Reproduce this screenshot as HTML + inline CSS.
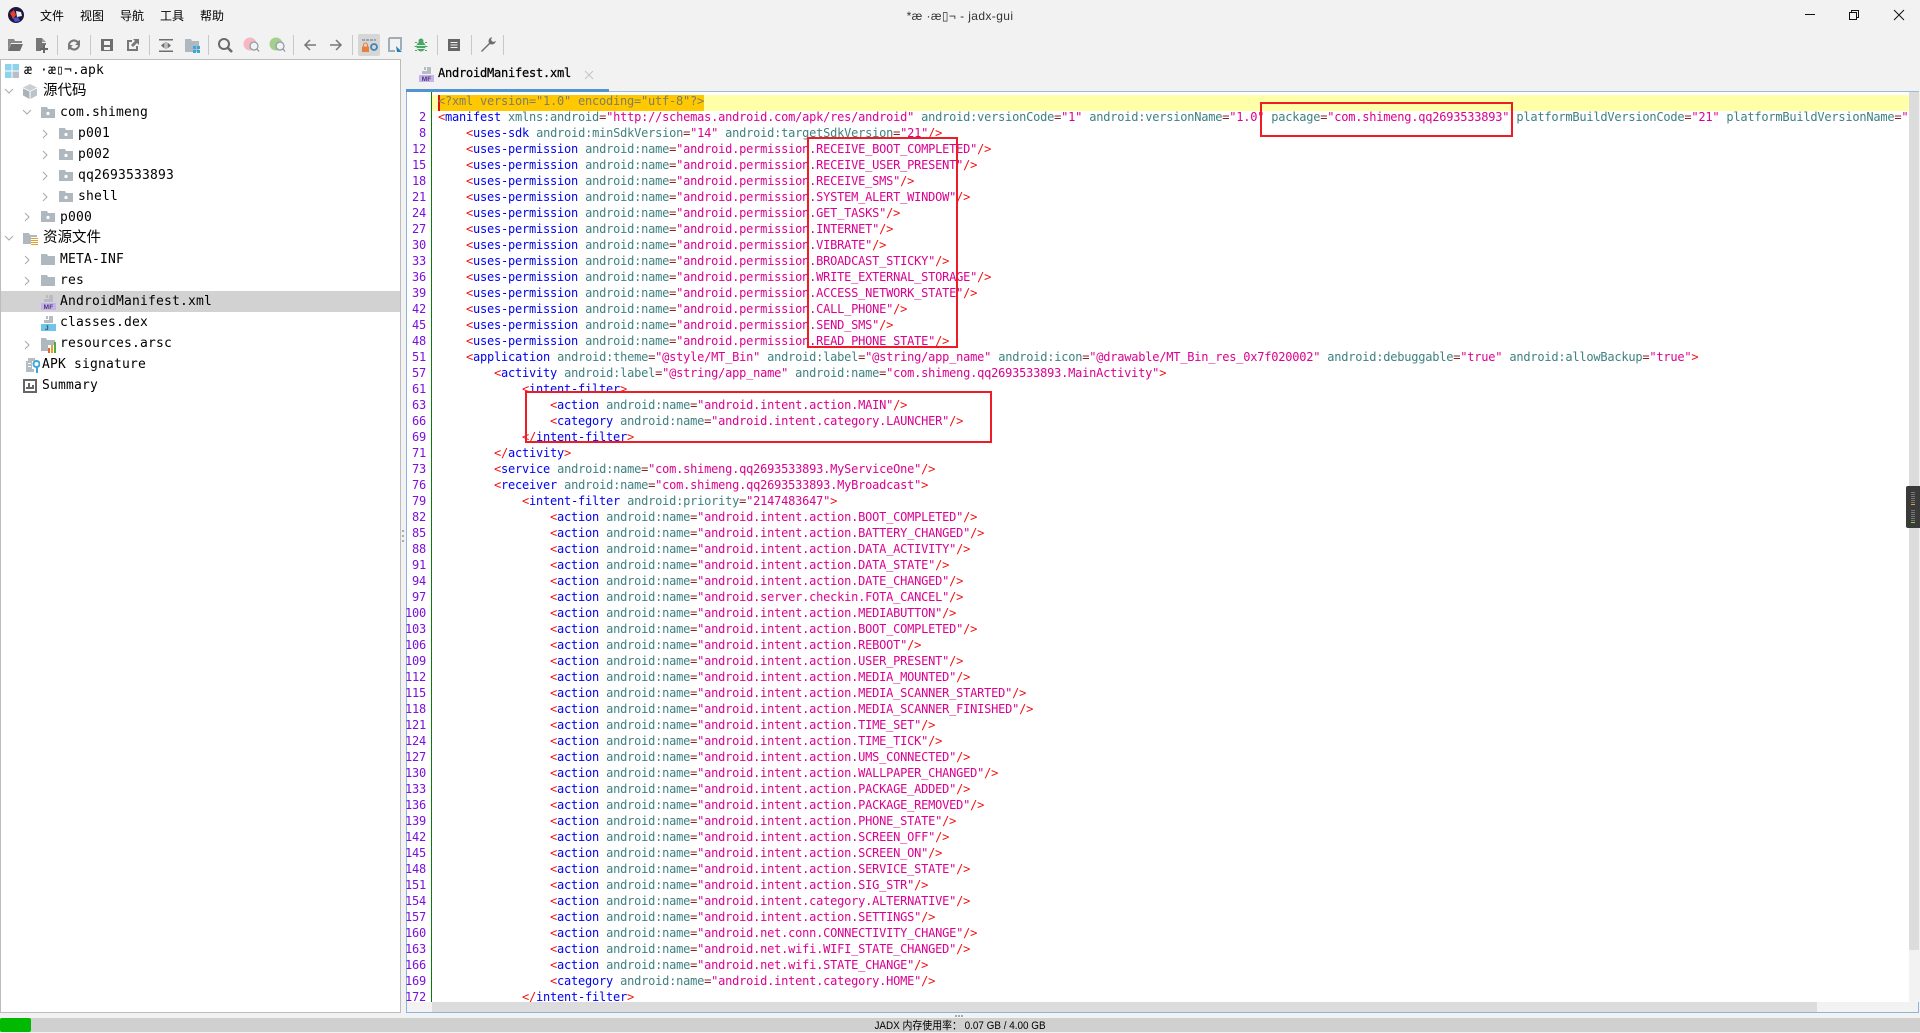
<!DOCTYPE html>
<html><head><meta charset="utf-8"><title>jadx-gui</title>
<style>
html,body{margin:0;padding:0;width:1920px;height:1032px;overflow:hidden;background:#f2f2f2}
.a{position:absolute}
.m{position:absolute;top:7px;font:12px/18px "Liberation Sans","Noto Sans CJK SC",sans-serif;color:#000}
#tree{position:absolute;left:0;top:59px;width:399px;height:952px;background:#fff;border:1px solid #bcbcbc}
.r{position:absolute;left:0;width:400px;height:21px;font:13px/21px "DejaVu Sans Mono",monospace;letter-spacing:.17px;color:#000;white-space:pre}
.r span{position:absolute;top:-1px}
.r span.cj{top:-3px;letter-spacing:0}
.r svg{position:absolute}
.r svg[width="10"]{margin-left:-1px}
.u svg{margin-top:-1px}
.cj{font:14.5px/21px "Noto Sans CJK SC",sans-serif}
#ed{position:absolute;left:406px;top:91px;width:1513px;height:922px;box-sizing:border-box;border:1px solid #8fb3d9;border-top-color:#9fb9d4;background:#fff}
#nums{position:absolute;left:400px;top:93px;width:26px;height:909px;overflow:hidden;text-align:right;font:12px/16px "DejaVu Sans Mono",monospace;letter-spacing:-.224px;color:#7a10d8}
#nums div{height:16px;white-space:pre}
#code{position:absolute;left:432px;top:93px;width:1477px;height:909px;overflow:hidden;font:12px/16px "DejaVu Sans Mono",monospace;letter-spacing:-.224px;color:#000}
#code p{margin:0;height:16px;padding-left:6px;white-space:pre}
b{color:#f01010;font-weight:normal}
u{color:#0000f0;text-decoration:none}
i{color:#3f8080;font-style:normal}
s{color:#8a2020;text-decoration:none}
em{color:#dc0090;font-style:normal}
.box{position:absolute;box-sizing:border-box;border:2px solid #ee1c25}
</style></head>
<body>
<svg width="0" height="0" style="position:absolute">
<defs>
<symbol id="fo" viewBox="0 0 14 12"><path d="M0 1h6l1 2h7v9H0z" fill="#afb8bf"/></symbol>
<symbol id="pk" viewBox="0 0 14 12"><path d="M0 1h6l1 2h7v9H0z" fill="#afb8bf"/><circle cx="7" cy="7.5" r="1.6" fill="#fff"/></symbol>
<symbol id="cr" viewBox="0 0 10 10"><path d="M3 1l4 4-4 4" fill="none" stroke="#a8a8a8" stroke-width="1"/></symbol>
<symbol id="cd" viewBox="0 0 10 10"><path d="M1 3l4 4 4-4" fill="none" stroke="#a8a8a8" stroke-width="1"/></symbol>
<symbol id="mf" viewBox="0 0 15 15"><path d="M5 0h2v3H5zM8 0h4v7H3V4h5z" fill="#b5bcc2"/><rect x="0" y="8" width="15" height="7" fill="#c9b1ec"/><text x="7.5" y="14" font-family="Liberation Sans" font-size="6.5" font-weight="bold" text-anchor="middle" fill="#4a3a70">MF</text></symbol>
</defs>
</svg>

<!-- title bar -->
<svg class="a" style="left:8px;top:7px" width="16" height="16" viewBox="0 0 16 16"><circle cx="8" cy="8" r="8" fill="#1f1640"/><path d="M2 6l4-3 2 5-3 4z" fill="#e8402a"/><path d="M8 4l5 1 1 4-5 1z" fill="#eee"/><path d="M5 11l5-1 2 4-5 1z" fill="#3f57c8"/></svg>
<div class="m" style="left:40px">文件</div>
<div class="m" style="left:80px">视图</div>
<div class="m" style="left:120px">导航</div>
<div class="m" style="left:160px">工具</div>
<div class="m" style="left:200px">帮助</div>
<div class="a" style="left:860px;width:200px;top:7px;text-align:center;font:12px/18px 'Liberation Sans','Noto Sans CJK SC',sans-serif;letter-spacing:.4px;color:#333;white-space:pre">*æ ·æ▯¬ - jadx-gui</div>
<svg class="a" style="left:1800px;top:5px" width="112" height="20" viewBox="0 0 112 20" fill="none" stroke="#111" stroke-width="1"><path d="M5 9.5h10"/><path d="M49.500 7.500h7v7h-7zM51.500 7.500v-2h7v7h-2"/><path d="M94 5l10 10M104 5L94 15"/></svg>

<!-- toolbar -->
<svg class="a" style="left:0;top:30px" width="520" height="30" viewBox="0 0 520 30" fill="#6e6e6e">
<g fill="#c8c8c8"><rect x="57" y="5" width="1" height="20"/><rect x="90" y="5" width="1" height="20"/><rect x="149" y="5" width="1" height="20"/><rect x="208" y="5" width="1" height="20"/><rect x="293" y="5" width="1" height="20"/><rect x="352" y="5" width="1" height="20"/><rect x="437" y="5" width="1" height="20"/><rect x="471" y="5" width="1" height="20"/><rect x="503" y="5" width="1" height="20"/></g>
<path d="M8 9h6l1 2h7v2H11l-3 8z" fill="#888"/><path d="M11 14h12l-3 7H8z" fill="#6e6e6e"/>
<path d="M36 8h6v5h4v2h-3v4h-2v2h-5z" fill="#777"/><path d="M42 8l4 4h-4z" fill="#999"/><path d="M43 15h2v3h3v2h-3v3h-2v-3h-3v-2h3z" fill="#666"/>
<path d="M68 15a6 6 0 0 1 10-4l2-1v5h-5l2-2a4 4 0 0 0-7 2zM80 15a6 6 0 0 1-10 4l-2 1v-5h5l-2 2a4 4 0 0 0 7-2z" fill="#777"/>
<path d="M101 9h12v12h-12zM104 11v4h6v-4zM104 17v3h6v-3z" fill-rule="evenodd" fill="#6e6e6e"/>
<path d="M127 10h5v2h-3v7h7v-3h2v5h-11zM133 9h6v6l-2-2-4 4-2-2 4-4z" fill="#777"/>
<path d="M159 9h14v1.500h-14zM159 20.500h14v1.500h-14z" fill="#6e6e6e"/><path d="M164.500 12.500l-3.500 3 3.500 3zM167.500 12.500l3.500 3-3.500 3z" fill="#6e6e6e"/><rect x="165.500" y="12" width="1" height="7" fill="#888"/>
<path d="M185 9h6l1 2h7v11h-14z" fill="#afb8bf"/><g fill="#3ba6dc"><rect x="193" y="16" width="3" height="3"/><rect x="197" y="16" width="3" height="3"/><rect x="193" y="20" width="3" height="3"/><rect x="197" y="20" width="3" height="3"/></g>
<circle cx="224" cy="14" r="5" fill="none" stroke="#6a6a6a" stroke-width="2"/><path d="M227.500 17.500l4.500 4.500" stroke="#6a6a6a" stroke-width="2.600"/>
<circle cx="250" cy="14" r="6.500" fill="#f4b8c2"/><circle cx="254" cy="16" r="4" fill="#f2f2f2" stroke="#8b9aa6" stroke-width="1.200"/><path d="M257 19l2 2.500" stroke="#8b9aa6" stroke-width="1.400"/>
<circle cx="276" cy="14" r="6.500" fill="#a6cf8f"/><circle cx="280" cy="16" r="4" fill="#f2f2f2" stroke="#8b9aa6" stroke-width="1.200"/><path d="M283 19l2 2.500" stroke="#8b9aa6" stroke-width="1.400"/>
<path d="M316 15h-11M310 10l-5 5 5 5" fill="none" stroke="#777" stroke-width="1.500"/>
<path d="M330 15h11M336 10l5 5-5 5" fill="none" stroke="#777" stroke-width="1.500"/>
<rect x="358" y="4" width="22" height="22" rx="2" fill="#d6d6d6"/>
<path d="M362 9h3v2h-3zM366 9h3v2h-3zM370 9h3v2h-3zM374 9h2v2h-2z" fill="#9aa4ad"/><rect x="362" y="16.500" width="7" height="5.500" fill="#e8803c"/><path d="M363.500 16.500v-1.500a2 2 0 0 1 4 0v1.500" fill="none" stroke="#e8803c"/><circle cx="374" cy="17" r="3" fill="none" stroke="#3d86b8" stroke-width="1.800"/>
<path d="M389 8h12v12M395 21h-6V8" fill="none" stroke="#9eadb8" stroke-width="2"/><path d="M396 16l6 6h-5z" fill="#2680b8"/>
<g fill="#4aa564"><ellipse cx="421" cy="16.500" rx="4.500" ry="5"/><circle cx="421" cy="11" r="2.500"/><path d="M415 12h2v1h-2zM425 12h2v1h-2zM414.500 16h2v1h-2zM425.500 16h2v1h-2zM415 20h2v1h-2zM425 20h2v1h-2z"/></g><path d="M417 15h8v1h-8zM417 18h8v1h-8z" fill="#d8f0df"/>
<rect x="448" y="9" width="12" height="12" fill="#666"/><path d="M450.500 12h7v1h-7zM450.500 14.500h7v1h-7zM450.500 17h7v1h-7z" fill="#f2f2f2"/>
<path d="M481 21l8-8a4 4 0 0 1 1-5l2-1-1 3 2 2 3-1-1 2a4 4 0 0 1-5 1l-8 8z" fill="#6e6e6e"/>
</svg>

<!-- tree -->
<div id="tree"></div>
<div class="a" style="left:1px;top:291px;width:399px;height:21px;background:#d2d2d2"></div>
<div style="position:absolute;left:0;top:0">
<div class="r" style="top:61px"><svg style="left:5px;top:3px" width="14" height="14" viewBox="0 0 14 14"><rect width="6.500" height="6.500" fill="#8fd2ec"/><rect x="7.500" width="6.500" height="6.500" fill="#8fd2ec"/><rect y="7.500" width="6.500" height="6.500" fill="#8fd2ec"/><rect x="7.500" y="7.500" width="6.500" height="6.500" fill="#b8c0c6"/></svg><span style="left:24px">æ ·æ▯¬.apk</span></div>
<div class="r u" style="top:82px"><svg style="left:5px;top:5px" width="10" height="10"><use href="#cd"/></svg><svg style="left:23px;top:3px" width="14" height="15" viewBox="0 0 14 15"><path d="M7 0l7 3.500-7 3.500-7-3.500z" fill="#c9cfd3"/><path d="M0 4.500l6.500 3v7.500L0 11.500z" fill="#aab3b9"/><path d="M14 4.500l-6.500 3v7.500l6.500-3.500z" fill="#bcc3c8"/></svg><span class="cj" style="left:43px">源代码</span></div>
<div class="r u" style="top:103px"><svg style="left:23px;top:5px" width="10" height="10"><use href="#cd"/></svg><svg style="left:41px;top:4px" width="14" height="12"><use href="#pk"/></svg><span style="left:60px">com.shimeng</span></div>
<div class="r u" style="top:124px"><svg style="left:41px;top:6px" width="10" height="10"><use href="#cr"/></svg><svg style="left:59px;top:4px" width="14" height="12"><use href="#pk"/></svg><span style="left:78px">p001</span></div>
<div class="r u" style="top:145px"><svg style="left:41px;top:6px" width="10" height="10"><use href="#cr"/></svg><svg style="left:59px;top:4px" width="14" height="12"><use href="#pk"/></svg><span style="left:78px">p002</span></div>
<div class="r u" style="top:166px"><svg style="left:41px;top:6px" width="10" height="10"><use href="#cr"/></svg><svg style="left:59px;top:4px" width="14" height="12"><use href="#pk"/></svg><span style="left:78px">qq2693533893</span></div>
<div class="r u" style="top:187px"><svg style="left:41px;top:6px" width="10" height="10"><use href="#cr"/></svg><svg style="left:59px;top:4px" width="14" height="12"><use href="#pk"/></svg><span style="left:78px">shell</span></div>
<div class="r u" style="top:208px"><svg style="left:23px;top:5px" width="10" height="10"><use href="#cr"/></svg><svg style="left:41px;top:3px" width="14" height="12"><use href="#pk"/></svg><span style="left:60px">p000</span></div>
<div class="r u" style="top:229px"><svg style="left:5px;top:5px" width="10" height="10"><use href="#cd"/></svg><svg style="left:23px;top:4px" width="14" height="12"><use href="#fo"/></svg><svg style="left:31px;top:9px" width="7" height="8" viewBox="0 0 7 8"><rect width="7" height="8" fill="#fff"/><path d="M0 1h7v1H0zM0 3h7v1H0zM0 5h7v1H0zM0 7h7v1H0z" fill="#e0a030"/></svg><span class="cj" style="left:43px">资源文件</span></div>
<div class="r u" style="top:250px"><svg style="left:23px;top:6px" width="10" height="10"><use href="#cr"/></svg><svg style="left:41px;top:4px" width="14" height="12"><use href="#fo"/></svg><span style="left:60px">META-INF</span></div>
<div class="r u" style="top:271px"><svg style="left:23px;top:6px" width="10" height="10"><use href="#cr"/></svg><svg style="left:41px;top:4px" width="14" height="12"><use href="#fo"/></svg><span style="left:60px">res</span></div>
<div class="r" style="top:292px"><svg style="left:41px;top:3px" width="15" height="15"><use href="#mf"/></svg><span style="left:60px">AndroidManifest.xml</span></div>
<div class="r" style="top:313px"><svg style="left:41px;top:3px" width="15" height="15" viewBox="0 0 15 15"><path d="M5 0h2v3H5zM8 0h4v7H3V4h5z" fill="#b5bcc2"/><rect y="8" width="15" height="7" fill="#6fc4e8"/><text x="4" y="14" font-family="Liberation Sans" font-size="6.500" font-weight="bold" fill="#24506a">J</text></svg><span style="left:60px">classes.dex</span></div>
<div class="r" style="top:334px"><svg style="left:23px;top:6px" width="10" height="10"><use href="#cr"/></svg><svg style="left:41px;top:4px" width="15" height="15" viewBox="0 0 15 15"><path d="M0 0h5l1 2h8v5H7v6H0z" fill="#afb8bf"/><rect x="7" y="10" width="2" height="5" fill="#e8642a"/><rect x="10" y="7" width="2" height="8" fill="#e8a02a"/><rect x="13" y="4" width="2" height="11" fill="#5aa83c"/></svg><span style="left:60px">resources.arsc</span></div>
<div class="r" style="top:355px"><svg style="left:25px;top:3px" width="15" height="15" viewBox="0 0 15 15"><path d="M3 0h7v3h-3v8h2v3H1V3h2z" fill="#b5bcc2"/><path d="M3 5h3v1H3zM3 8h3v1H3z" fill="#fff"/><circle cx="11.500" cy="6" r="3" fill="#fff" stroke="#3ba6dc" stroke-width="2"/><path d="M11 9h2v6h-2z" fill="#3ba6dc"/></svg><span style="left:42px">APK signature</span></div>
<div class="r" style="top:376px"><svg style="left:23px;top:3px" width="14" height="14" viewBox="0 0 14 14"><path d="M0 0h14v14H0zM2 2v10h10V2zM3 10h8V6H9v2H7V4H5v4H3z" fill="#666" fill-rule="evenodd"/></svg><span style="left:42px">Summary</span></div>
</div>
<div class="a" style="left:402px;top:530px;width:2px;height:2px;background:#aaa;box-shadow:0 5px #aaa,0 10px #aaa"></div>

<!-- tab -->
<svg class="a" style="left:419px;top:67px" width="15" height="15"><use href="#mf"/></svg>
<div class="a" style="left:438px;top:65px;font:12px/16px 'DejaVu Sans Mono',monospace;letter-spacing:-.224px;-webkit-text-stroke:.25px #000;color:#000;white-space:pre">AndroidManifest.xml</div>
<svg class="a" style="left:584px;top:70px" width="10" height="10" fill="none" stroke="#c4c4c4"><path d="M1 1l8 8M9 1l-8 8"/></svg>

<!-- editor -->
<div id="ed"></div>
<div class="a" style="left:406px;top:89px;width:203px;height:3px;background:#4f93d0"></div>
<div class="a" style="left:431px;top:92px;width:1px;height:910px;background:#0a7a0a"></div>
<div class="a" style="left:407px;top:1002px;width:1511px;height:10px;background:#f2f2f2"></div>
<div class="a" style="left:432px;top:1002px;width:1385px;height:10px;background:#dcdcdc"></div>
<div class="a" style="left:1909px;top:92px;width:10px;height:910px;background:#f2f2f2"></div>
<div class="a" style="left:1909px;top:92px;width:10px;height:858px;background:#dcdcdc"></div>

<div class="a" style="left:432px;top:95px;width:1477px;height:16px;background:#ffffa8"></div>
<div class="a" style="left:438px;top:95px;width:266px;height:16px;background:#ffc800"></div>
<div class="a" style="left:438px;top:95px;width:2px;height:16px;background:#e81010"></div>

<div id="nums"><div> </div><div>2</div><div>8</div><div>12</div><div>15</div><div>18</div><div>21</div><div>24</div><div>27</div><div>30</div><div>33</div><div>36</div><div>39</div><div>42</div><div>45</div><div>48</div><div>51</div><div>57</div><div>61</div><div>63</div><div>66</div><div>69</div><div>71</div><div>73</div><div>76</div><div>79</div><div>82</div><div>85</div><div>88</div><div>91</div><div>94</div><div>97</div><div>100</div><div>103</div><div>106</div><div>109</div><div>112</div><div>115</div><div>118</div><div>121</div><div>124</div><div>127</div><div>130</div><div>133</div><div>136</div><div>139</div><div>142</div><div>145</div><div>148</div><div>151</div><div>154</div><div>157</div><div>160</div><div>163</div><div>166</div><div>169</div><div>172</div></div>

<div id="code">
<p style="color:#7f7f60">&lt;?xml version="1.0" encoding="utf-8"?&gt;</p>
<p><b>&lt;</b><u>manifest</u> <i>xmlns:android</i><s>=</s><em>"http://schemas.android.com/apk/res/android"</em> <i>android:versionCode</i><s>=</s><em>"1"</em> <i>android:versionName</i><s>=</s><em>"1.0"</em> <i>package</i><s>=</s><em>"com.shimeng.qq2693533893"</em> <i>platformBuildVersionCode</i><s>=</s><em>"21"</em> <i>platformBuildVersionName</i><s>=</s><em>"5.0.1-1624448"</em><b>&gt;</b></p>
<p>    <b>&lt;</b><u>uses-sdk</u> <i>android:minSdkVersion</i><s>=</s><em>"14"</em> <i>android:targetSdkVersion</i><s>=</s><em>"21"</em><b>/&gt;</b></p>
<p>    <b>&lt;</b><u>uses-permission</u> <i>android:name</i><s>=</s><em>"android.permission.RECEIVE_BOOT_COMPLETED"</em><b>/&gt;</b></p>
<p>    <b>&lt;</b><u>uses-permission</u> <i>android:name</i><s>=</s><em>"android.permission.RECEIVE_USER_PRESENT"</em><b>/&gt;</b></p>
<p>    <b>&lt;</b><u>uses-permission</u> <i>android:name</i><s>=</s><em>"android.permission.RECEIVE_SMS"</em><b>/&gt;</b></p>
<p>    <b>&lt;</b><u>uses-permission</u> <i>android:name</i><s>=</s><em>"android.permission.SYSTEM_ALERT_WINDOW"</em><b>/&gt;</b></p>
<p>    <b>&lt;</b><u>uses-permission</u> <i>android:name</i><s>=</s><em>"android.permission.GET_TASKS"</em><b>/&gt;</b></p>
<p>    <b>&lt;</b><u>uses-permission</u> <i>android:name</i><s>=</s><em>"android.permission.INTERNET"</em><b>/&gt;</b></p>
<p>    <b>&lt;</b><u>uses-permission</u> <i>android:name</i><s>=</s><em>"android.permission.VIBRATE"</em><b>/&gt;</b></p>
<p>    <b>&lt;</b><u>uses-permission</u> <i>android:name</i><s>=</s><em>"android.permission.BROADCAST_STICKY"</em><b>/&gt;</b></p>
<p>    <b>&lt;</b><u>uses-permission</u> <i>android:name</i><s>=</s><em>"android.permission.WRITE_EXTERNAL_STORAGE"</em><b>/&gt;</b></p>
<p>    <b>&lt;</b><u>uses-permission</u> <i>android:name</i><s>=</s><em>"android.permission.ACCESS_NETWORK_STATE"</em><b>/&gt;</b></p>
<p>    <b>&lt;</b><u>uses-permission</u> <i>android:name</i><s>=</s><em>"android.permission.CALL_PHONE"</em><b>/&gt;</b></p>
<p>    <b>&lt;</b><u>uses-permission</u> <i>android:name</i><s>=</s><em>"android.permission.SEND_SMS"</em><b>/&gt;</b></p>
<p>    <b>&lt;</b><u>uses-permission</u> <i>android:name</i><s>=</s><em>"android.permission.READ_PHONE_STATE"</em><b>/&gt;</b></p>
<p>    <b>&lt;</b><u>application</u> <i>android:theme</i><s>=</s><em>"@style/MT_Bin"</em> <i>android:label</i><s>=</s><em>"@string/app_name"</em> <i>android:icon</i><s>=</s><em>"@drawable/MT_Bin_res_0x7f020002"</em> <i>android:debuggable</i><s>=</s><em>"true"</em> <i>android:allowBackup</i><s>=</s><em>"true"</em><b>&gt;</b></p>
<p>        <b>&lt;</b><u>activity</u> <i>android:label</i><s>=</s><em>"@string/app_name"</em> <i>android:name</i><s>=</s><em>"com.shimeng.qq2693533893.MainActivity"</em><b>&gt;</b></p>
<p>            <b>&lt;</b><u>intent-filter</u><b>&gt;</b></p>
<p>                <b>&lt;</b><u>action</u> <i>android:name</i><s>=</s><em>"android.intent.action.MAIN"</em><b>/&gt;</b></p>
<p>                <b>&lt;</b><u>category</u> <i>android:name</i><s>=</s><em>"android.intent.category.LAUNCHER"</em><b>/&gt;</b></p>
<p>            <b>&lt;/</b><u>intent-filter</u><b>&gt;</b></p>
<p>        <b>&lt;/</b><u>activity</u><b>&gt;</b></p>
<p>        <b>&lt;</b><u>service</u> <i>android:name</i><s>=</s><em>"com.shimeng.qq2693533893.MyServiceOne"</em><b>/&gt;</b></p>
<p>        <b>&lt;</b><u>receiver</u> <i>android:name</i><s>=</s><em>"com.shimeng.qq2693533893.MyBroadcast"</em><b>&gt;</b></p>
<p>            <b>&lt;</b><u>intent-filter</u> <i>android:priority</i><s>=</s><em>"2147483647"</em><b>&gt;</b></p>
<p>                <b>&lt;</b><u>action</u> <i>android:name</i><s>=</s><em>"android.intent.action.BOOT_COMPLETED"</em><b>/&gt;</b></p>
<p>                <b>&lt;</b><u>action</u> <i>android:name</i><s>=</s><em>"android.intent.action.BATTERY_CHANGED"</em><b>/&gt;</b></p>
<p>                <b>&lt;</b><u>action</u> <i>android:name</i><s>=</s><em>"android.intent.action.DATA_ACTIVITY"</em><b>/&gt;</b></p>
<p>                <b>&lt;</b><u>action</u> <i>android:name</i><s>=</s><em>"android.intent.action.DATA_STATE"</em><b>/&gt;</b></p>
<p>                <b>&lt;</b><u>action</u> <i>android:name</i><s>=</s><em>"android.intent.action.DATE_CHANGED"</em><b>/&gt;</b></p>
<p>                <b>&lt;</b><u>action</u> <i>android:name</i><s>=</s><em>"android.server.checkin.FOTA_CANCEL"</em><b>/&gt;</b></p>
<p>                <b>&lt;</b><u>action</u> <i>android:name</i><s>=</s><em>"android.intent.action.MEDIABUTTON"</em><b>/&gt;</b></p>
<p>                <b>&lt;</b><u>action</u> <i>android:name</i><s>=</s><em>"android.intent.action.BOOT_COMPLETED"</em><b>/&gt;</b></p>
<p>                <b>&lt;</b><u>action</u> <i>android:name</i><s>=</s><em>"android.intent.action.REBOOT"</em><b>/&gt;</b></p>
<p>                <b>&lt;</b><u>action</u> <i>android:name</i><s>=</s><em>"android.intent.action.USER_PRESENT"</em><b>/&gt;</b></p>
<p>                <b>&lt;</b><u>action</u> <i>android:name</i><s>=</s><em>"android.intent.action.MEDIA_MOUNTED"</em><b>/&gt;</b></p>
<p>                <b>&lt;</b><u>action</u> <i>android:name</i><s>=</s><em>"android.intent.action.MEDIA_SCANNER_STARTED"</em><b>/&gt;</b></p>
<p>                <b>&lt;</b><u>action</u> <i>android:name</i><s>=</s><em>"android.intent.action.MEDIA_SCANNER_FINISHED"</em><b>/&gt;</b></p>
<p>                <b>&lt;</b><u>action</u> <i>android:name</i><s>=</s><em>"android.intent.action.TIME_SET"</em><b>/&gt;</b></p>
<p>                <b>&lt;</b><u>action</u> <i>android:name</i><s>=</s><em>"android.intent.action.TIME_TICK"</em><b>/&gt;</b></p>
<p>                <b>&lt;</b><u>action</u> <i>android:name</i><s>=</s><em>"android.intent.action.UMS_CONNECTED"</em><b>/&gt;</b></p>
<p>                <b>&lt;</b><u>action</u> <i>android:name</i><s>=</s><em>"android.intent.action.WALLPAPER_CHANGED"</em><b>/&gt;</b></p>
<p>                <b>&lt;</b><u>action</u> <i>android:name</i><s>=</s><em>"android.intent.action.PACKAGE_ADDED"</em><b>/&gt;</b></p>
<p>                <b>&lt;</b><u>action</u> <i>android:name</i><s>=</s><em>"android.intent.action.PACKAGE_REMOVED"</em><b>/&gt;</b></p>
<p>                <b>&lt;</b><u>action</u> <i>android:name</i><s>=</s><em>"android.intent.action.PHONE_STATE"</em><b>/&gt;</b></p>
<p>                <b>&lt;</b><u>action</u> <i>android:name</i><s>=</s><em>"android.intent.action.SCREEN_OFF"</em><b>/&gt;</b></p>
<p>                <b>&lt;</b><u>action</u> <i>android:name</i><s>=</s><em>"android.intent.action.SCREEN_ON"</em><b>/&gt;</b></p>
<p>                <b>&lt;</b><u>action</u> <i>android:name</i><s>=</s><em>"android.intent.action.SERVICE_STATE"</em><b>/&gt;</b></p>
<p>                <b>&lt;</b><u>action</u> <i>android:name</i><s>=</s><em>"android.intent.action.SIG_STR"</em><b>/&gt;</b></p>
<p>                <b>&lt;</b><u>action</u> <i>android:name</i><s>=</s><em>"android.intent.category.ALTERNATIVE"</em><b>/&gt;</b></p>
<p>                <b>&lt;</b><u>action</u> <i>android:name</i><s>=</s><em>"android.intent.action.SETTINGS"</em><b>/&gt;</b></p>
<p>                <b>&lt;</b><u>action</u> <i>android:name</i><s>=</s><em>"android.net.conn.CONNECTIVITY_CHANGE"</em><b>/&gt;</b></p>
<p>                <b>&lt;</b><u>action</u> <i>android:name</i><s>=</s><em>"android.net.wifi.WIFI_STATE_CHANGED"</em><b>/&gt;</b></p>
<p>                <b>&lt;</b><u>action</u> <i>android:name</i><s>=</s><em>"android.net.wifi.STATE_CHANGE"</em><b>/&gt;</b></p>
<p>                <b>&lt;</b><u>category</u> <i>android:name</i><s>=</s><em>"android.intent.category.HOME"</em><b>/&gt;</b></p>
<p>            <b>&lt;/</b><u>intent-filter</u><b>&gt;</b></p>
</div>

<!-- annotations -->
<div class="box" style="left:1260px;top:102px;width:253px;height:35px"></div>
<div class="box" style="left:807px;top:137px;width:151px;height:211px"></div>
<div class="box" style="left:525px;top:391px;width:467px;height:52px"></div>

<!-- overview strip -->
<div class="a" style="left:1906px;top:486px;width:14px;height:42px;background:#3a3a3a;border-radius:2px 0 0 2px"></div>
<svg class="a" style="left:1911px;top:492px" width="4" height="31" viewBox="0 0 4 31"><g fill="#777"><rect y="0" width="4" height="1"/><rect y="2" width="4" height="1"/><rect y="4" width="4" height="1"/><rect y="6" width="4" height="1"/><rect y="8" width="4" height="1"/><rect y="10" width="4" height="1"/><rect y="18" width="4" height="1"/><rect y="20" width="4" height="1"/><rect y="22" width="4" height="1"/><rect y="24" width="4" height="1"/><rect y="26" width="4" height="1"/><rect y="28" width="4" height="1"/></g><rect y="12" width="4" height="1" fill="#f0a020"/><rect y="30" width="4" height="1" fill="#80e020"/></svg>

<!-- status -->
<div class="a" style="left:955px;top:1015px;width:2px;height:2px;background:#aaa;box-shadow:3px 0 #aaa,6px 0 #aaa"></div>
<div class="a" style="left:0;top:1018px;width:1920px;height:14px;background:#d0d0d0"></div>
<div class="a" style="left:0;top:1018px;width:31px;height:14px;background:#00b900;border-radius:2px"></div>
<div class="a" style="left:760px;top:1019px;width:400px;height:14px;text-align:center;font:11px/14px 'Liberation Sans','Noto Sans CJK SC',sans-serif;color:#000;white-space:pre;transform:scaleX(.9)">JADX 内存使用率： 0.07 GB / 4.00 GB</div>
</body></html>
